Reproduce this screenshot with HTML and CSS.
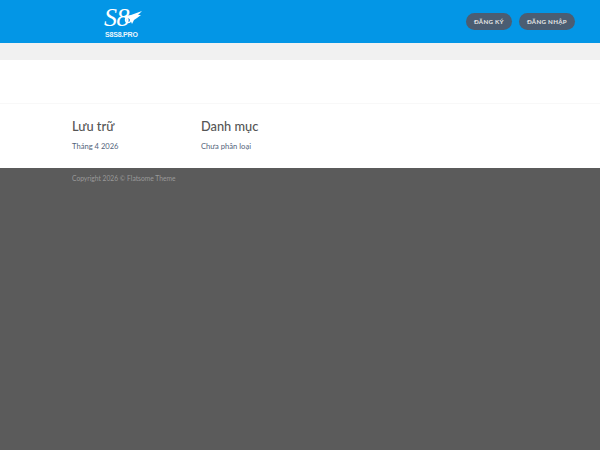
FILE: index.html
```html
<!DOCTYPE html>
<html lang="vi">
<head>
<meta charset="utf-8">
<title>S8</title>
<link rel="stylesheet" href="styles.css">
</head>
<body>
<header class="top">
  <div class="logo">
    <div class="logo-mark"><span class="logo-s">S8</span>
      <svg class="logo-wing" width="20" height="15" viewBox="0 0 20 15"><path d="M1 6 L8 5 L19 1 L15 5 L18 5 L14 8 L11 10 L9 14 L7 9 Z" fill="#fff"/><circle cx="5" cy="10" r="2.6" fill="none" stroke="#fff" stroke-width="1.2"/></svg>
    </div>
    <div class="logo-sub">S8S8.PRO</div>
  </div>
  <nav class="actions">
    <a class="pill">ĐĂNG KÝ</a>
    <a class="pill">ĐĂNG NHẬP</a>
  </nav>
</header>
<div class="band"></div>
<div class="blank"></div>
<section class="widgets">
  <div class="widget w-archive">
    <h3>Lưu trữ</h3>
    <a>Tháng 4 2026</a>
  </div>
  <div class="widget">
    <h3>Danh mục</h3>
    <a>Chưa phân loại</a>
  </div>
</section>
<footer class="foot">
  <p>Copyright 2026 © Flatsome Theme</p>
</footer>
</body>
</html>
```
FILE: styles.css
```css
html, body { margin: 0; height: 100%; }
body { display: flex; flex-direction: column; height: 450px; overflow: hidden; background: #5b5b5b; font-family: Lato, sans-serif; }
.top { height: 43px; background: #0396e6; display: flex; justify-content: space-between; align-items: center; padding: 0 25px 0 104px; }
.logo { width: 40px; color: #fff; display: flex; flex-direction: column; margin-top: 1px; }
.logo-mark { display: flex; height: 24px; align-items: flex-start; }
.logo-s { font-family: "Liberation Serif", serif; font-style: italic; font-size: 26px; line-height: 24px; letter-spacing: -.5px; }
.logo-wing { margin: 4px 0 0 -6px; flex: none; }
.logo-sub { font-family: "Liberation Sans", sans-serif; font-weight: 700; font-size: 7px; line-height: 7px; margin: 1px 0 0 1px; letter-spacing: -.2px; color: #eaf5fc; }
.actions { display: flex; gap: 7px; }
.pill { height: 17px; line-height: 17px; padding: 0 8px; border-radius: 9px; background: #4b5d72; color: #e8e8e8; font-size: 6.2px; font-weight: 700; letter-spacing: .3px; }
.band { height: 17px; background: #f1f1f1; }
.blank { height: 43px; background: #fff; border-bottom: 1px solid #f8f8f8; }
.widgets { height: 64px; background: #fff; display: flex; padding-left: 72px; }
.widget { display: flex; flex-direction: column; align-items: flex-start; }
.w-archive { width: 129px; }
.widget h3 { margin: 14px 0 0; font-size: 12.8px; line-height: 16px; font-weight: 500; color: #555; }
.widget a { margin-top: 6px; font-size: 7.6px; line-height: 12px; color: #52637a; }
.foot { flex: 1; background: #5b5b5b; padding: 5px 0 0 72px; }
.foot p { margin: 0; font-size: 6.7px; line-height: 10px; color: #9a9a9a; }
```
